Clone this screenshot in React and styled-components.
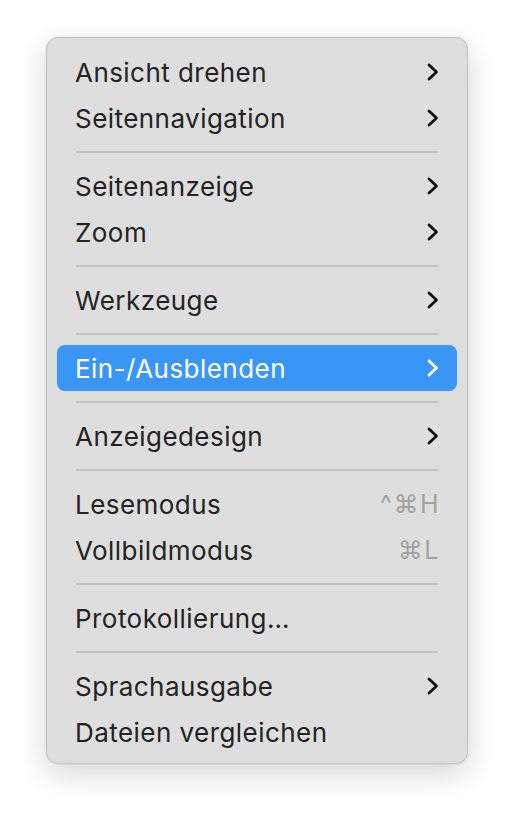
import React from 'react';
import styled, { createGlobalStyle } from 'styled-components';

const Global = createGlobalStyle`
  html, body { margin:0; padding:0; background:#ffffff; }
  body { font-family: Inter, "Noto Sans", "Liberation Sans", sans-serif; }
`

const Page = styled.div`
  width:514px;
  height:818px;
  padding:37px 0 0 46px;
  box-sizing:border-box;
`

const Menu = styled.div`
  width:422px;
  box-sizing:border-box;
  background:#dedede;
  border:1px solid #c2c2c2;
  border-radius:12px;
  padding:11px 10px 8px 10px;
  box-shadow:0 10px 30px rgba(0,0,0,0.16), 0 0 3px rgba(0,0,0,0.08);
  display:flex;
  flex-direction:column;
`

const Item = styled.div`
  height:46px;
  display:flex;
  align-items:center;
  justify-content:space-between;
  padding:0 18px 0 18px;
  border-radius:8px;
  font-size:26px;
  letter-spacing:0.45px;
  color:${({ active }) => active ? '#ffffff' : '#232323'};
  background:${({ active }) => active ? '#3996f7' : 'transparent'};
`

const Separator = styled.div`
  height:22px;
  display:flex;
  align-items:center;
  padding:0 19px;
  &::after{
    content:'';
    flex:1;
    height:2px;
    background:#c3c3c3;
  }
`

const Shortcut = styled.span`
  color:#a3a3a3;
  font-size:25px;
  letter-spacing:1.5px;
  margin-right:-1px;
`

const Chevron = ({ color }) => (
  <svg width="13" height="18" viewBox="0 0 13 18">
    <path d="M3 2 L10.5 9 L3 16" fill="none" stroke={color} strokeWidth="2.8" strokeLinecap="round" strokeLinejoin="round" />
  </svg>
)

const groups = [
  [{ label: 'Ansicht drehen', sub: true }, { label: 'Seitennavigation', sub: true }],
  [{ label: 'Seitenanzeige', sub: true }, { label: 'Zoom', sub: true }],
  [{ label: 'Werkzeuge', sub: true }],
  [{ label: 'Ein-/Ausblenden', sub: true, active: true }],
  [{ label: 'Anzeigedesign', sub: true }],
  [{ label: 'Lesemodus', keys: '^⌘H' }, { label: 'Vollbildmodus', keys: '⌘L' }],
  [{ label: 'Protokollierung…' }],
  [{ label: 'Sprachausgabe', sub: true }, { label: 'Dateien vergleichen' }],
]

const App = () => {
  return (
    <Page>
      <Global />
      <Menu>
        {groups.map((g, gi) => (
          <React.Fragment key={gi}>
            {gi > 0 && <Separator />}
            {g.map(it => (
              <Item key={it.label} active={it.active}>
                <span>{it.label}</span>
                {it.sub && <Chevron color={it.active ? '#ffffff' : '#111111'} />}
                {it.keys && <Shortcut>{it.keys}</Shortcut>}
              </Item>
            ))}
          </React.Fragment>
        ))}
      </Menu>
    </Page>
  )
}

export default App
